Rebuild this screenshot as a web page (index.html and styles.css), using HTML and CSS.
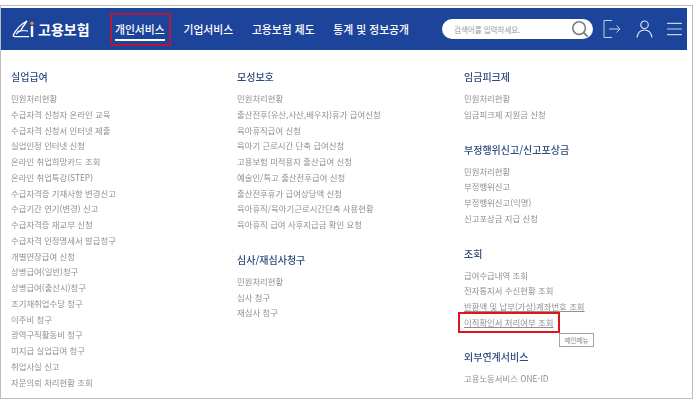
FILE: index.html
```html
<!DOCTYPE html>
<html lang="ko">
<head>
<meta charset="utf-8">
<title>고용보험</title>
<link rel="stylesheet" href="styles.css">
</head>
<body>
<div class="frame">
  <header class="header">
    <a class="logo">
      <svg class="logo-mark" viewBox="0 0 22 18" width="22" height="18" aria-hidden="true">
        <path d="M1 15.5 C4 9.5 9 4 15 1 C12 5 10 8 8.5 11 C7 11.5 5.5 12.5 4 14" fill="none" stroke="#fff" stroke-width="1.3"/>
        <path d="M1 15.5 C1.5 16.8 3 16.8 5 16.6 L17 16.6" fill="none" stroke="#fff" stroke-width="1.3"/>
        <path d="M5 11.5 C8 10.5 12 10.5 16 11" fill="none" stroke="#fff" stroke-width="1"/>
        <circle cx="20" cy="3.2" r="1.7" fill="#ef8a2c"/>
        <rect x="18.8" y="6" width="2.4" height="11" fill="#fff"/>
      </svg>
      <span class="logo-text">고용보험</span>
    </a>
    <nav class="nav">
      <a class="nav-item active"><span>개인서비스</span></a>
      <a class="nav-item"><span>기업서비스</span></a>
      <a class="nav-item"><span>고용보험 제도</span></a>
      <a class="nav-item"><span>통계 및 정보공개</span></a>
    </nav>
    <div class="search">
      <span class="placeholder">검색어를 입력하세요.</span>
      <svg viewBox="0 0 20 20" width="18" height="18" aria-hidden="true">
        <circle cx="9" cy="9" r="7" fill="none" stroke="#7d7d7d" stroke-width="1.8"/>
        <path d="M14 14 L18.5 18.5" stroke="#7d7d7d" stroke-width="2.2"/>
      </svg>
    </div>
    <div class="tools">
      <svg viewBox="0 0 19 20" width="19" height="20" aria-hidden="true">
        <path d="M9 1.5 H1 V18.5 H9" fill="none" stroke="#c4d0e8" stroke-width="1"/>
        <path d="M6 10 H17 M13.5 6.5 L17 10 L13.5 13.5" fill="none" stroke="#c4d0e8" stroke-width="1"/>
      </svg>
      <svg viewBox="0 0 18 20" width="17" height="20" aria-hidden="true">
        <circle cx="9" cy="5.5" r="4" fill="none" stroke="#e3e9f5" stroke-width="1.2"/>
        <path d="M1 19 C2 13 5 11 9 11 C13 11 16 13 17 19" fill="none" stroke="#e3e9f5" stroke-width="1.2"/>
      </svg>
      <svg viewBox="0 0 16 16" width="15" height="16" aria-hidden="true">
        <path d="M0 2 H16 M0 8 H16 M0 14 H16" stroke="#c4d0e8" stroke-width="1.2"/>
      </svg>
    </div>
  </header>
  <main class="columns">
    <div class="col">
      <section class="group">
        <h2>실업급여</h2>
        <ul>
          <li>민원처리현황</li>
          <li>수급자격 신청자 온라인 교육</li>
          <li>수급자격 신청서 인터넷 제출</li>
          <li>실업인정 인터넷 신청</li>
          <li>온라인 취업희망카드 조회</li>
          <li>온라인 취업특강(STEP)</li>
          <li>수급자격증 기재사항 변경신고</li>
          <li>수급기간 연기(변경) 신고</li>
          <li>수급자격증 재교부 신청</li>
          <li>수급자격 인정명세서 발급청구</li>
          <li>개별연장급여 신청</li>
          <li>상병급여(일반)청구</li>
          <li>상병급여(출산시)청구</li>
          <li>조기재취업수당 청구</li>
          <li>이주비 청구</li>
          <li>광역구직활동비 청구</li>
          <li>미지급 실업급여 청구</li>
          <li>취업사실 신고</li>
          <li>자문의뢰 처리현황 조회</li>
        </ul>
      </section>
    </div>
    <div class="col">
      <section class="group">
        <h2>모성보호</h2>
        <ul>
          <li>민원처리현황</li>
          <li>출산전후(유산,사산,배우자)휴가 급여신청</li>
          <li>육아휴직급여 신청</li>
          <li>육아기 근로시간 단축 급여신청</li>
          <li>고용보험 미적용자 출산급여 신청</li>
          <li>예술인/특고 출산전후급여 신청</li>
          <li>출산전후휴가 급여상당액 신청</li>
          <li>육아휴직/육아기근로시간단축 사용현황</li>
          <li>육아휴직 급여 사후지급금 확인 요청</li>
        </ul>
      </section>
      <section class="group">
        <h2>심사/재심사청구</h2>
        <ul>
          <li>민원처리현황</li>
          <li>심사 청구</li>
          <li>재심사 청구</li>
        </ul>
      </section>
    </div>
    <div class="col">
      <section class="group">
        <h2>임금피크제</h2>
        <ul>
          <li>민원처리현황</li>
          <li>임금피크제 지원금 신청</li>
        </ul>
      </section>
      <section class="group">
        <h2>부정행위신고/신고포상금</h2>
        <ul>
          <li>민원처리현황</li>
          <li>부정행위신고</li>
          <li>부정행위신고(익명)</li>
          <li>신고포상금 지급 신청</li>
        </ul>
      </section>
      <section class="group group-lookup">
        <h2>조회</h2>
        <ul>
          <li>급여수급내역 조회</li>
          <li>전자통지서 수신현황 조회</li>
          <li class="underlined">반환액 및 납부(가상)계좌번호 조회</li>
          <li class="target"><span class="underlined marked">이직확인서 처리여부 조회</span><span class="tip">메인메뉴</span></li>
        </ul>
      </section>
      <section class="group">
        <h2>외부연계서비스</h2>
        <ul>
          <li>고용노동서비스 ONE-ID</li>
        </ul>
      </section>
    </div>
  </main>
</div>
</body>
</html>
```
FILE: styles.css
```css
* { box-sizing: border-box; }
html, body { margin: 0; padding: 0; background: #fff; }
body {
  width: 699px;
  height: 403px;
  overflow: hidden;
  padding-top: 5px;
  font-family: "Noto Sans CJK KR", "Noto Sans", sans-serif;
}
.frame {
  width: 693px;
  height: 394px;
  border: 1px solid #bdbdbd;
  padding-top: 2px;
  filter: blur(0.45px);
}
.header {
  width: 686px;
  height: 42px;
  background: #1d449b;
  display: flex;
  align-items: center;
  color: #fff;
}
.logo {
  width: 114px;
  display: flex;
  align-items: center;
  gap: 4px;
  padding-left: 11px;
}
.logo-mark { flex: none; }
.logo-text { font-size: 14px; font-weight: 700; white-space: nowrap; }
.nav { display: flex; align-items: center; width: 327px; }
.nav-item {
  position: relative;
  font-size: 10.8px;
  font-weight: 500;
  line-height: 16px;
  margin-right: 18.8px;
  white-space: nowrap;
}
.nav-item span { display: block; }
.nav-item.active span::after {
  content: "";
  position: absolute;
  left: 0;
  right: 0;
  bottom: -3.5px;
  height: 2px;
  background: #fff;
}
.nav-item.active::after {
  content: "";
  position: absolute;
  left: -5px;
  right: -6px;
  top: -8px;
  bottom: -9px;
  border: 2px solid #ad1a3c;
  border-radius: 1px;
}
.search {
  width: 151px;
  height: 20px;
  background: #fff;
  border-radius: 10px;
  display: flex;
  align-items: center;
  justify-content: space-between;
  padding: 0 4px 0 12px;
}
.placeholder { font-size: 7.5px; color: #9a9a9a; white-space: nowrap; }
.tools {
  display: flex;
  align-items: center;
  margin-left: 10px;
  gap: 14px;
}
.columns {
  display: grid;
  grid-template-columns: 226px 227px 1fr;
  padding: 19px 0 0 10px;
}
.group { margin-bottom: 19px; }
.group-lookup { margin-bottom: 18px; }
h2 {
  margin: 0 0 6px;
  font-size: 10px;
  line-height: 16px;
  font-weight: 500;
  color: #2d4a7d;
  white-space: nowrap;
}
ul { list-style: none; margin: 0; padding: 0; }
li {
  font-size: 8.4px;
  line-height: 15.75px;
  color: #909090;
  white-space: nowrap;
}
.underlined { text-decoration: underline; text-underline-offset: 1px; }
.target { position: relative; }
.marked { outline: 2px solid #e0141e; outline-offset: 3px; display: inline-block; line-height: 11px; padding-right: 2px; margin-left: -1px; padding-left: 1px; }
.tip {
  position: absolute;
  left: 95px;
  top: 18px;
  width: 35px;
  height: 14px;
  border: 1px solid #a5a5a5;
  background: #fff;
  font-size: 6.5px;
  line-height: 12px;
  text-align: center;
  color: #888;
}
```
